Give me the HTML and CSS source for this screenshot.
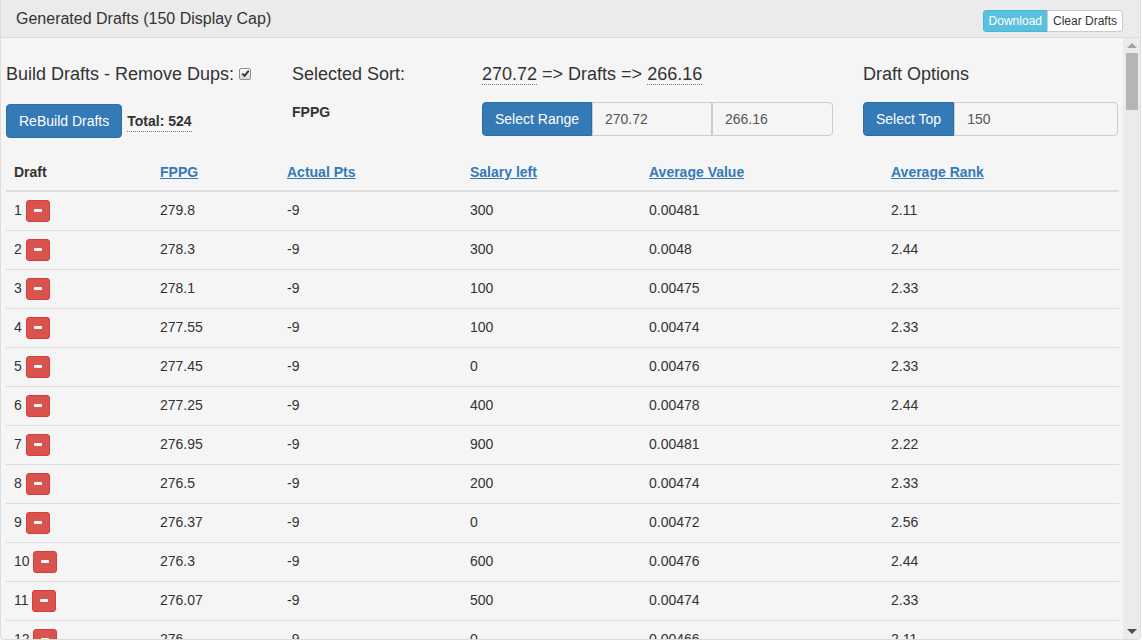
FILE: index.html
```html
<!DOCTYPE html>
<html lang="en">
<head>
<meta charset="utf-8">
<title>Generated Drafts</title>
<link rel="stylesheet" href="styles.css">
</head>
<body>
<div class="panel">
  <div class="panel-heading">
    <h3 class="panel-title">Generated Drafts (150 Display Cap)</h3>
    <div class="btn-group">
      <button class="btn-xs btn-info" type="button">Download</button>
      <button class="btn-xs btn-default" type="button">Clear Drafts</button>
    </div>
  </div>
  <div class="panel-main">
    <div class="panel-body">
      <div class="controls">
        <div class="ctl">
          <h4 class="ctl-title ctl-flex">Build Drafts - Remove Dups: <span class="check"><svg width="9" height="9" viewBox="0 0 9 9"><path d="M1.2 4.6 L3.5 6.9 L7.8 1.6" fill="none" stroke="#333" stroke-width="1.9"/></svg></span></h4>
          <div class="rebuild-row">
            <button class="btn btn-primary" type="button">ReBuild Drafts</button>
            <abbr class="abbr total" title="Total drafts">Total: 524</abbr>
          </div>
        </div>
        <div class="ctl">
          <h4 class="ctl-title">Selected Sort:</h4>
          <div class="sort-value">FPPG</div>
        </div>
        <div class="ctl">
          <h4 class="ctl-title"><abbr class="abbr" title="Max">270.72</abbr> =&gt; Drafts =&gt; <abbr class="abbr" title="Min">266.16</abbr></h4>
          <div class="input-group range">
            <button class="btn btn-primary ig-btn" type="button">Select Range</button>
            <input class="form-control in-a" type="text" value="270.72">
            <input class="form-control in-b last" type="text" value="266.16">
          </div>
        </div>
        <div class="ctl">
          <h4 class="ctl-title">Draft Options</h4>
          <div class="input-group">
            <button class="btn btn-primary ig-btn" type="button">Select Top</button>
            <input class="form-control grow last" type="text" value="150">
          </div>
        </div>
      </div>
      <table class="drafts">
        <colgroup>
          <col class="c1"><col class="c2"><col class="c3"><col class="c4"><col class="c5"><col class="c6">
        </colgroup>
        <thead>
          <tr>
            <th>Draft</th>
            <th><a href="#">FPPG</a></th>
            <th><a href="#">Actual Pts</a></th>
            <th><a href="#">Salary left</a></th>
            <th><a href="#">Average Value</a></th>
            <th><a href="#">Average Rank</a></th>
          </tr>
        </thead>
        <tbody id="rows">
          <tr><td>1 <button class="btn-del" type="button"><span class="minus"></span></button></td><td>279.8</td><td>-9</td><td>300</td><td>0.00481</td><td>2.11</td></tr>
          <tr><td>2 <button class="btn-del" type="button"><span class="minus"></span></button></td><td>278.3</td><td>-9</td><td>300</td><td>0.0048</td><td>2.44</td></tr>
          <tr><td>3 <button class="btn-del" type="button"><span class="minus"></span></button></td><td>278.1</td><td>-9</td><td>100</td><td>0.00475</td><td>2.33</td></tr>
          <tr><td>4 <button class="btn-del" type="button"><span class="minus"></span></button></td><td>277.55</td><td>-9</td><td>100</td><td>0.00474</td><td>2.33</td></tr>
          <tr><td>5 <button class="btn-del" type="button"><span class="minus"></span></button></td><td>277.45</td><td>-9</td><td>0</td><td>0.00476</td><td>2.33</td></tr>
          <tr><td>6 <button class="btn-del" type="button"><span class="minus"></span></button></td><td>277.25</td><td>-9</td><td>400</td><td>0.00478</td><td>2.44</td></tr>
          <tr><td>7 <button class="btn-del" type="button"><span class="minus"></span></button></td><td>276.95</td><td>-9</td><td>900</td><td>0.00481</td><td>2.22</td></tr>
          <tr><td>8 <button class="btn-del" type="button"><span class="minus"></span></button></td><td>276.5</td><td>-9</td><td>200</td><td>0.00474</td><td>2.33</td></tr>
          <tr><td>9 <button class="btn-del" type="button"><span class="minus"></span></button></td><td>276.37</td><td>-9</td><td>0</td><td>0.00472</td><td>2.56</td></tr>
          <tr><td>10 <button class="btn-del" type="button"><span class="minus"></span></button></td><td>276.3</td><td>-9</td><td>600</td><td>0.00476</td><td>2.44</td></tr>
          <tr><td>11 <button class="btn-del" type="button"><span class="minus"></span></button></td><td>276.07</td><td>-9</td><td>500</td><td>0.00474</td><td>2.33</td></tr>
          <tr><td>12 <button class="btn-del" type="button"><span class="minus"></span></button></td><td>276</td><td>-9</td><td>0</td><td>0.00466</td><td>2.11</td></tr>
        </tbody>
      </table>
    </div>
    <div class="vscroll" aria-hidden="true">
      <div class="vs-btn"><span class="arrow-up"></span></div>
      <div class="vs-track"><div class="vs-thumb"></div></div>
      <div class="vs-btn"><span class="arrow-down"></span></div>
    </div>
  </div>
</div>
<script src="script.js"></script>
</body>
</html>
```

FILE: styles.css
```css
html, body {
  margin: 0;
  padding: 0;
}

body {
  font-family: "Liberation Sans", Arial, Helvetica, sans-serif;
  font-size: 14px;
  line-height: 20px;
  color: #333;
  background: #fff;
}

.panel {
  width: 1141px;
  height: 640px;
  box-sizing: border-box;
  border: 1px solid #ddd;
  border-top: 0;
  border-radius: 0 0 4px 4px;
  background: #f5f5f5;
  display: flex;
  flex-direction: column;
  overflow: hidden;
}

.panel-heading {
  flex: none;
  height: 38px;
  box-sizing: border-box;
  border-bottom: 1px solid #ddd;
  background: #ebebeb;
  display: flex;
  justify-content: space-between;
  align-items: flex-start;
  padding: 10px 17px 0 15px;
}

.panel-title {
  margin: 0;
  font-size: 16px;
  font-weight: normal;
  line-height: 17.6px;
  color: #333;
}

.btn-group {
  display: flex;
}

.btn-xs {
  font-family: "Liberation Sans", Arial, Helvetica, sans-serif;
  font-size: 12px;
  line-height: 18px;
  padding: 1px 5px;
  border: 1px solid;
  margin: 0;
  cursor: pointer;
}

.btn-info {
  background: #5bc0de;
  border-color: #46b8da;
  color: #fff;
  border-radius: 3px 0 0 3px;
}

.btn-default {
  background: #fff;
  border-color: #ccc;
  color: #333;
  border-radius: 0 3px 3px 0;
  margin-left: -1px;
}

.panel-main {
  flex: 1;
  min-height: 0;
  display: flex;
}

.panel-body {
  flex: 1;
  min-width: 0;
  overflow-y: auto;
  scrollbar-width: none;
  padding: 26px 3px 0 5px;
}

.vscroll {
  flex: none;
  width: 17px;
  display: flex;
  flex-direction: column;
  background: #ebebeb;
}

.vs-btn {
  flex: none;
  height: 15px;
  display: flex;
  align-items: center;
  justify-content: center;
}

.arrow-up {
  width: 0;
  height: 0;
  border-left: 5px solid transparent;
  border-right: 5px solid transparent;
  border-bottom: 5px solid #a3a3a3;
}

.arrow-down {
  width: 0;
  height: 0;
  border-left: 5px solid transparent;
  border-right: 5px solid transparent;
  border-top: 5px solid #505050;
}

.vs-track {
  flex: 1;
}

.vs-thumb {
  height: 57px;
  margin: 0 2px 0 3px;
  background: #b5b5b5;
}

.controls {
  display: grid;
  grid-template-columns: 286px 190px 381px 255px;
}

.ctl {
  min-width: 0;
}

.ctl-title {
  margin: 0;
  font-size: 18px;
  font-weight: normal;
  line-height: 20px;
  white-space: nowrap;
}

.ctl-flex {
  display: flex;
  align-items: center;
  gap: 5px;
}

.check {
  box-sizing: border-box;
  width: 12px;
  height: 12px;
  border: 1px solid #8f8f8f;
  border-radius: 2px;
  background: linear-gradient(#fdfdfd, #d9d9d9);
  display: inline-flex;
  align-items: center;
  justify-content: center;
  margin-top: -1px;
}

.abbr {
  text-decoration: none;
  border-bottom: 1px dotted #777;
  cursor: help;
}

.total {
  font-weight: bold;
}

.rebuild-row {
  margin-top: 20px;
  display: flex;
  align-items: baseline;
  gap: 5px;
}

.btn {
  font-family: "Liberation Sans", Arial, Helvetica, sans-serif;
  font-size: 14px;
  line-height: 20px;
  padding: 6px 12px;
  border: 1px solid;
  border-radius: 4px;
  margin: 0;
  cursor: pointer;
}

.btn-primary {
  background: #337ab7;
  border-color: #2e6da4;
  color: #fff;
}

.sort-value {
  margin-top: 18px;
  font-weight: bold;
}

.input-group {
  margin-top: 18px;
  display: flex;
  height: 34px;
}

.input-group.range {
  width: 351px;
}

.ig-btn {
  flex: none;
  border-radius: 4px 0 0 4px;
}

.range .ig-btn {
  width: 110px;
  padding: 6px 0;
}

.form-control {
  box-sizing: border-box;
  height: 34px;
  margin: 0;
  padding: 6px 12px;
  border: 1px solid #ccc;
  border-radius: 0;
  background: #f5f5f5;
  color: #555;
  font-family: "Liberation Sans", Arial, Helvetica, sans-serif;
  font-size: 14px;
  line-height: 20px;
  min-width: 0;
}

.in-a {
  width: 120px;
}

.in-b {
  width: 121px;
}

.grow {
  flex: 1;
  width: 0;
}

.form-control.last {
  border-radius: 0 4px 4px 0;
}

.drafts {
  margin-top: 16px;
  width: 1113px;
  border-collapse: collapse;
  table-layout: fixed;
}

.c1 { width: 146px; }
.c2 { width: 127px; }
.c3 { width: 183px; }
.c4 { width: 179px; }
.c5 { width: 242px; }
.c6 { width: 236px; }

.drafts th {
  text-align: left;
  vertical-align: bottom;
  padding: 8px;
  border-bottom: 2px solid #ddd;
  font-weight: bold;
  line-height: 20px;
}

.drafts th a {
  color: #337ab7;
  text-decoration: underline;
}

.drafts td {
  padding: 8px;
  vertical-align: top;
  border-top: 1px solid #ddd;
  line-height: 20px;
  white-space: nowrap;
}

.btn-del {
  display: inline-flex;
  align-items: center;
  justify-content: center;
  vertical-align: top;
  box-sizing: border-box;
  width: 24px;
  height: 22px;
  margin: 0;
  padding: 0;
  border: 1px solid #d43f3a;
  border-radius: 3px;
  background: #d9534f;
  cursor: pointer;
}

.minus {
  display: block;
  width: 8px;
  height: 3px;
  margin-top: -1px;
  background: #fff;
  border-radius: 1px;
}
```

FILE: script.js
```js
(function () {
  var tb = document.getElementById('rows');
  var seed = 7;
  function rnd() {
    seed = (seed * 9301 + 49297) % 233280;
    return seed / 233280;
  }
  var ranks = ['2.11', '2.22', '2.33', '2.44', '2.56', '2.67', '2'];
  for (var i = 13; i <= 150; i++) {
    var f = 276 - (i - 12) * 0.0713 - rnd() * 0.03;
    var fs = parseFloat(f.toFixed(2)).toString();
    var sal = Math.floor(rnd() * 10) * 100;
    var av = parseFloat((0.00455 + rnd() * 0.00025).toFixed(5)).toString();
    var rk = ranks[Math.floor(rnd() * ranks.length)];
    var tr = document.createElement('tr');
    tr.innerHTML = '<td>' + i + ' <button class="btn-del" type="button"><span class="minus"></span></button></td>' +
      '<td>' + fs + '</td><td>-9</td><td>' + sal + '</td><td>' + av + '</td><td>' + rk + '</td>';
    tb.appendChild(tr);
  }
})();
```
